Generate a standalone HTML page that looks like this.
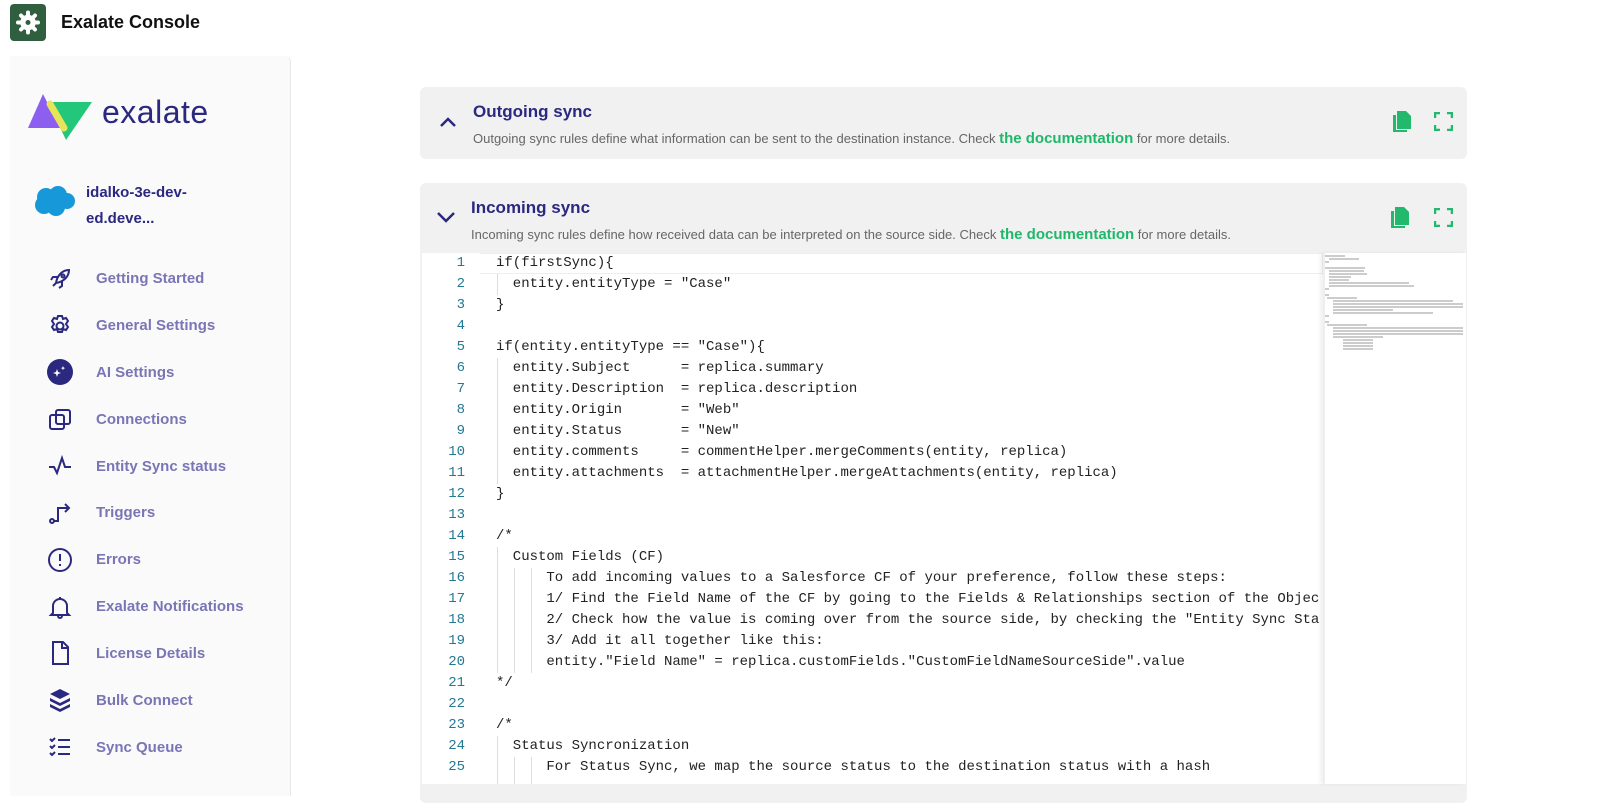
<!DOCTYPE html>
<html><head><meta charset="utf-8"><style>
*{box-sizing:border-box;margin:0;padding:0}
body{width:1600px;height:784px;overflow:hidden;background:#fff;font-family:"Liberation Sans",sans-serif;position:relative}
.top-ic{position:absolute;left:10px;top:4px;width:36px;height:37px;background:#2f5f3f;border-radius:4px}
.title{position:absolute;left:61px;top:12px;font-size:18px;font-weight:bold;color:#111}
.side{position:absolute;left:10px;top:56px;width:281px;height:740px;background:#fafafb;border-right:1px solid #e8e8ec;border-top-right-radius:6px}
.nav{position:absolute;left:96px;font-size:15px;font-weight:bold;color:#7a75b5}
.ni{position:absolute;left:47px;width:26px;height:26px}
.panel{position:absolute;left:420px;width:1047px;background:#f1f1f1;border-radius:6px}
.ph{position:absolute;font-size:17px;font-weight:bold;color:#2b2880}
.pd{position:absolute;font-size:13px;color:#666;white-space:nowrap}
.pd b{color:#1fb86a;font-size:15px}
.ed{position:absolute;left:422px;top:253px;width:1044px;height:531px;background:#fff}
.ln{position:absolute;left:430px;width:35px;text-align:right;font-family:"Liberation Mono",monospace;font-size:14px;color:#237893}
.cd{position:absolute;left:496px;font-family:"Liberation Mono",monospace;font-size:14px;color:#222;white-space:pre}
.mini{position:absolute;left:1323px;top:253px;width:143px;height:531px;background:#fff;box-shadow:-3px 0 4px rgba(0,0,0,.06)}
.guide{position:absolute;width:1px;background:#ddd}
</style></head><body>
<div class="top-ic"><svg width="36" height="37" viewBox="0 0 36 37"><g transform="translate(18 18.5)" fill="none" stroke="#fff" stroke-width="3"><circle r="4"/><path d="M0-10V-7M0 7V10M-10 0H-7M7 0H10M-7-7L-5-5M5 5L7 7M-7 7L-5 5M5-5L7-7" stroke-linecap="round" stroke-width="4"/><circle r="6.5" stroke-width="2.5"/></g></svg></div>
<div class="title">Exalate Console</div>
<div class="side"></div>
<svg style="position:absolute;left:28px;top:92px" width="66" height="50" viewBox="0 0 66 50"><path d="M15 2 L32 36 L0 36 Z" fill="#8d5ff0"/><path d="M20 10 L64 10 L38 48 Z" fill="#22c77a"/><path d="M22 12 L36 36" stroke="#e8e45a" stroke-width="7" stroke-linecap="round"/></svg>
<div style="position:absolute;left:102px;top:94px;font-size:32px;color:#2b2880;letter-spacing:.5px">exalate</div>
<svg style="position:absolute;left:34px;top:185px" width="42" height="32" viewBox="0 0 42 32"><g fill="#1798d8"><circle cx="12" cy="12" r="9"/><circle cx="24" cy="10" r="9"/><circle cx="33" cy="16" r="8"/><circle cx="10" cy="20" r="9"/><circle cx="22" cy="22" r="9"/></g></svg>
<div style="position:absolute;left:86px;top:180px;font-size:15px;font-weight:bold;color:#2b2880;line-height:26px">idalko-3e-dev-<br>ed.deve...</div>

<svg class="ni" style="top:266px" viewBox="0 0 26 26" fill="none" stroke="#2b2880" stroke-width="2"><path d="M9 17 C10 10 15 4 22 4 C22 11 16 16 9 17Z M9 17 L6 20 M11 11 L6 11 L4 14 M15 15 L15 20 L12 22"/><circle cx="16" cy="10" r="1.5"/></svg>
<div class="nav" style="top:270px">Getting Started</div>
<svg class="ni" style="top:313px" viewBox="0 0 26 26" fill="none" stroke="#2b2880" stroke-width="2"><circle cx="13" cy="13" r="3.5"/><path d="M11 3h4l1 3 3-1 2 3-2 3 2 3-2 3-3-1-1 3h-4l-1-3-3 1-2-3 2-3-2-3 2-3 3 1z"/></svg>
<div class="nav" style="top:317px">General Settings</div>
<svg class="ni" style="top:359px" viewBox="0 0 26 26"><circle cx="13" cy="13" r="13" fill="#2b2880"/><path d="M10 10l1 3 3 1-3 1-1 3-1-3-3-1 3-1z M16 7l.6 1.5 1.5.6-1.5.6-.6 1.5-.6-1.5-1.5-.6 1.5-.6z" fill="#fff"/></svg>
<div class="nav" style="top:364px">AI Settings</div>
<svg class="ni" style="top:407px" viewBox="0 0 26 26" fill="none" stroke="#2b2880" stroke-width="2"><rect x="3" y="8" width="14" height="14" rx="2"/><rect x="9" y="3" width="14" height="14" rx="2"/></svg>
<div class="nav" style="top:411px">Connections</div>
<svg class="ni" style="top:453px" viewBox="0 0 26 26" fill="none" stroke="#2b2880" stroke-width="2"><path d="M2 14h5l3 6 5-15 3 9h6"/></svg>
<div class="nav" style="top:458px">Entity Sync status</div>
<svg class="ni" style="top:500px" viewBox="0 0 26 26" fill="none" stroke="#2b2880" stroke-width="2"><circle cx="5" cy="21" r="2"/><path d="M7 21h4v-13h11 M18 4l4 4-4 4"/></svg>
<div class="nav" style="top:504px">Triggers</div>
<svg class="ni" style="top:547px" viewBox="0 0 26 26" fill="none" stroke="#2b2880" stroke-width="2"><circle cx="13" cy="13" r="11"/><path d="M13 7v7M13 17v2"/></svg>
<div class="nav" style="top:551px">Errors</div>
<svg class="ni" style="top:594px" viewBox="0 0 26 26" fill="none" stroke="#2b2880" stroke-width="2"><path d="M6 19V12a7 7 0 0 1 14 0v7l2 2H4z M11 22a2 2 0 0 0 4 0 M13 3v2"/></svg>
<div class="nav" style="top:598px">Exalate Notifications</div>
<svg class="ni" style="top:640px" viewBox="0 0 26 26" fill="none" stroke="#2b2880" stroke-width="2"><path d="M6 2h10l5 5v17H6z M15 2v6h6"/></svg>
<div class="nav" style="top:645px">License Details</div>
<svg class="ni" style="top:687px" viewBox="0 0 26 26" fill="#2b2880"><path d="M13 2l10 5-10 5-10-5z M3 11l10 5 10-5v3l-10 5-10-5z M3 17l10 5 10-5v3l-10 5-10-5z"/></svg>
<div class="nav" style="top:692px">Bulk Connect</div>
<svg class="ni" style="top:734px" viewBox="0 0 26 26" fill="none" stroke="#2b2880" stroke-width="2"><path d="M3 5l2 2 3-3 M3 12l2 2 3-3 M3 19l2 2 3-3 M11 6h12 M11 13h12 M11 20h12"/></svg>
<div class="nav" style="top:739px">Sync Queue</div>

<div class="panel" style="top:87px;height:72px"></div>
<svg style="position:absolute;left:439px;top:116px" width="18" height="12" viewBox="0 0 18 12"><path d="M2 10l7-7 7 7" stroke="#2b2880" stroke-width="2.5" fill="none"/></svg>
<div class="ph" style="left:473px;top:102px">Outgoing sync</div>
<div class="pd" style="left:473px;top:130px">Outgoing sync rules define what information can be sent to the destination instance. Check <b>the documentation</b> for more details.</div>
<div class="panel" style="top:183px;height:620px"></div>
<svg style="position:absolute;left:436px;top:211px" width="20" height="12" viewBox="0 0 20 12"><path d="M2 2l8 8 8-8" stroke="#2b2880" stroke-width="2.5" fill="none"/></svg>
<div class="ph" style="left:471px;top:198px">Incoming sync</div>
<div class="pd" style="left:471px;top:226px">Incoming sync rules define how received data can be interpreted on the source side. Check <b>the documentation</b> for more details.</div>
<svg style="position:absolute;left:1392px;top:110px" width="20" height="22" viewBox="0 0 20 22"><path d="M1 5h3v15h11v2H1z" fill="#22b96c"/><path d="M5 1h9l5 5v13H5z" fill="#22b96c"/></svg>
<svg style="position:absolute;left:1434px;top:112px" width="19" height="19" viewBox="0 0 19 19" fill="none" stroke="#22b96c" stroke-width="2.5"><path d="M1 6V1h5M13 1h5v5M18 13v5h-5M6 18H1v-5"/></svg>
<svg style="position:absolute;left:1390px;top:206px" width="20" height="22" viewBox="0 0 20 22"><path d="M1 5h3v15h11v2H1z" fill="#22b96c"/><path d="M5 1h9l5 5v13H5z" fill="#22b96c"/></svg>
<svg style="position:absolute;left:1434px;top:208px" width="19" height="19" viewBox="0 0 19 19" fill="none" stroke="#22b96c" stroke-width="2.5"><path d="M1 6V1h5M13 1h5v5M18 13v5h-5M6 18H1v-5"/></svg>

<div class="ed"></div>
<div style="position:absolute;left:480px;top:253px;width:843px;height:21px;border:1px solid #eee;border-left:none"></div>
<div class="guide" style="left:497px;top:274px;height:21px"></div>
<div class="guide" style="left:497px;top:358px;height:126px"></div>
<div class="guide" style="left:497px;top:547px;height:126px"></div>
<div class="guide" style="left:514px;top:568px;height:105px"></div>
<div class="guide" style="left:531px;top:568px;height:105px"></div>
<div class="guide" style="left:497px;top:736px;height:48px"></div>
<div class="guide" style="left:514px;top:757px;height:27px"></div>
<div class="guide" style="left:531px;top:757px;height:27px"></div>
<div id="code"></div>
<div class="mini"><svg width="143" height="100" viewBox="0 0 143 100"><g stroke="#999" stroke-width="1"><path d="M2 3h20M6 6h30M2 9h4M2 15h40M6 18h35M6 21h38M6 24h22M6 27h20M6 30h80M6 33h85M2 36h4M2 42h4M4 45h30M10 48h120M10 51h130M10 54h130M10 57h60M10 60h100M2 63h4M2 69h4M4 72h40M10 75h130M10 78h130M10 81h130M10 84h50M20 87h30M20 90h30M20 93h30M20 96h30"/></g></svg></div>
<script>
var L=['if(firstSync){','  entity.entityType = "Case"','}','','if(entity.entityType == "Case"){','  entity.Subject      = replica.summary','  entity.Description  = replica.description','  entity.Origin       = "Web"','  entity.Status       = "New"','  entity.comments     = commentHelper.mergeComments(entity, replica)','  entity.attachments  = attachmentHelper.mergeAttachments(entity, replica)','}','','/*','  Custom Fields (CF)','      To add incoming values to a Salesforce CF of your preference, follow these steps:','      1/ Find the Field Name of the CF by going to the Fields & Relationships section of the Objec','      2/ Check how the value is coming over from the source side, by checking the "Entity Sync Sta','      3/ Add it all together like this:','      entity."Field Name" = replica.customFields."CustomFieldNameSourceSide".value','*/','','/*','  Status Syncronization','      For Status Sync, we map the source status to the destination status with a hash'];
var h='';for(var i=0;i<L.length;i++){var t=253+i*21+2;h+='<div class="ln" style="top:'+t+'px">'+(i+1)+'</div><div class="cd" style="top:'+t+'px">'+L[i].replace(/&/g,'&amp;').replace(/</g,'&lt;')+'</div>';}
document.getElementById('code').innerHTML=h;
</script>
<div style="position:absolute;left:1323px;top:253px;width:2px;height:531px;background:#eee"></div>
</body></html>
